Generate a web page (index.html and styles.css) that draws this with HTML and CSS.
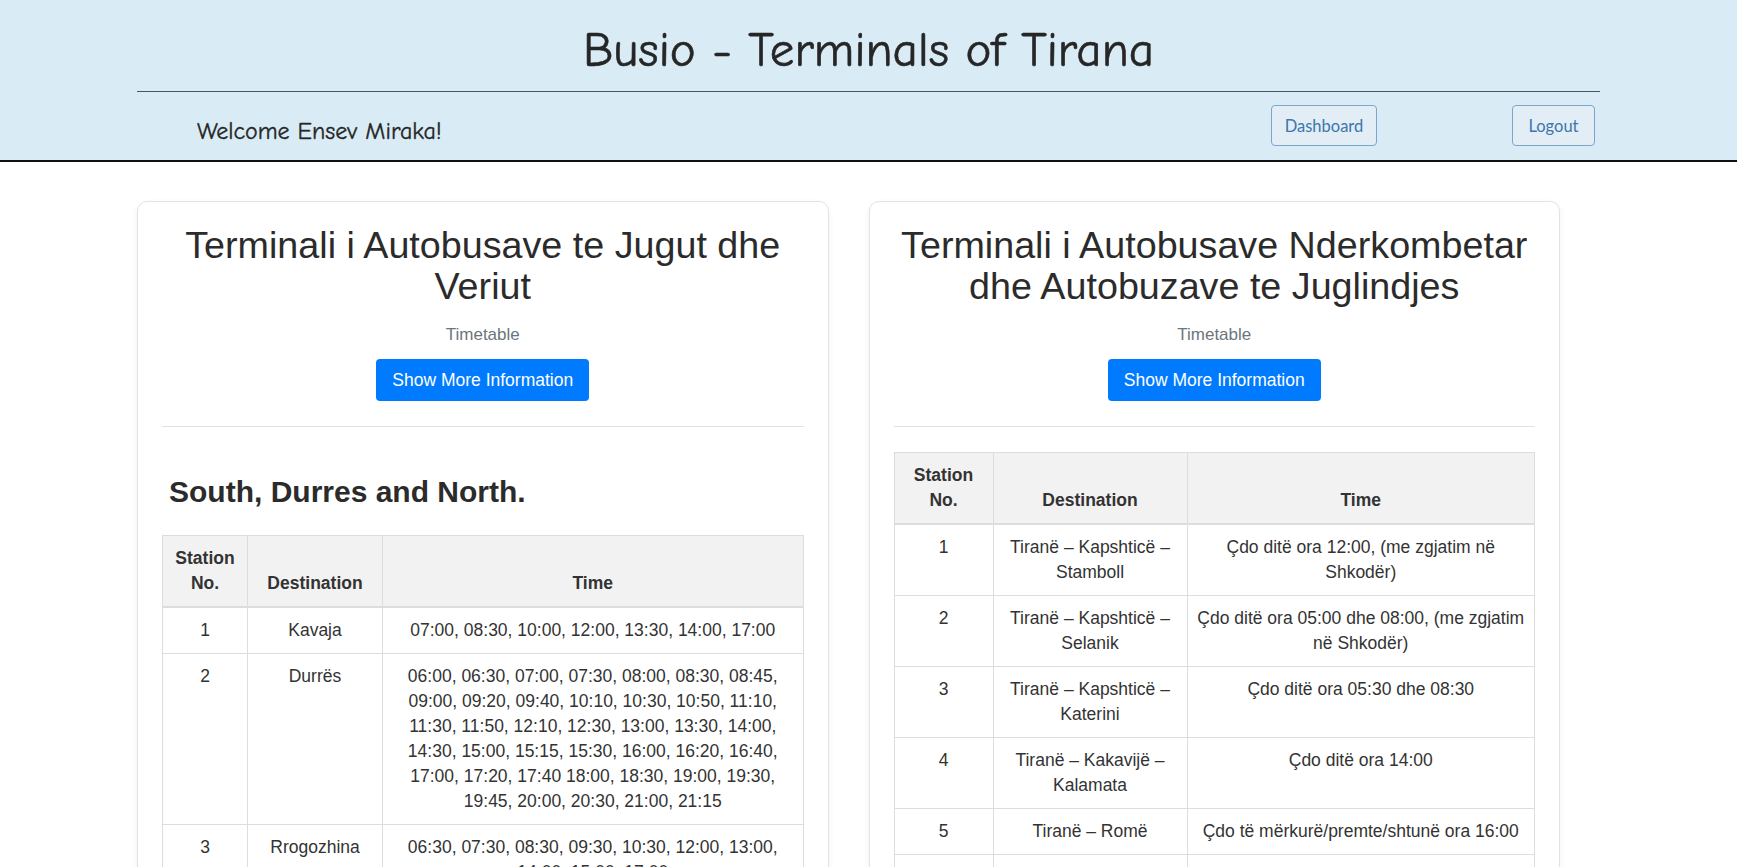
FILE: index.html
```html
<!DOCTYPE html>
<html lang="sq">
<head>
<meta charset="utf-8">
<title>Busio - Terminals of Tirana</title>
<link rel="stylesheet" href="styles.css">
</head>
<body>
<header class="site-header">
  <h1 class="site-title">Busio - Terminals of Tirana</h1>
  <div class="header-inner">
    <hr class="header-rule">
    <div class="user-bar">
      <span class="welcome">Welcome Ensev Miraka!</span>
      <a class="nav-btn nav-btn-dash" href="#">Dashboard</a>
      <a class="nav-btn nav-btn-logout" href="#">Logout</a>
    </div>
  </div>
</header>

<main class="terminals">
  <section class="card">
    <h2 class="card-title">Terminali i Autobusave te Jugut dhe Veriut</h2>
    <p class="card-subtitle">Timetable</p>
    <a class="btn-info" href="#">Show More Information</a>
    <hr class="card-divider">
    <h3 class="route-heading">South, Durres and North.</h3>
    <table class="timetable">
      <colgroup><col class="col-no-a"><col class="col-dest-a"><col></colgroup>
      <thead>
        <tr><th>Station No.</th><th>Destination</th><th>Time</th></tr>
      </thead>
      <tbody>
        <tr><td>1</td><td>Kavaja</td><td>07:00, 08:30, 10:00, 12:00, 13:30, 14:00, 17:00</td></tr>
        <tr><td>2</td><td>Durrës</td><td>06:00, 06:30, 07:00, 07:30, 08:00, 08:30, 08:45, 09:00, 09:20, 09:40, 10:10, 10:30, 10:50, 11:10, 11:30, 11:50, 12:10, 12:30, 13:00, 13:30, 14:00, 14:30, 15:00, 15:15, 15:30, 16:00, 16:20, 16:40, 17:00, 17:20, 17:40 18:00, 18:30, 19:00, 19:30, 19:45, 20:00, 20:30, 21:00, 21:15</td></tr>
        <tr><td>3</td><td>Rrogozhina</td><td>06:30, 07:30, 08:30, 09:30, 10:30, 12:00, 13:00, 14:00, 15:00, 17:00</td></tr>
      </tbody>
    </table>
  </section>

  <section class="card">
    <h2 class="card-title">Terminali i Autobusave Nderkombetar dhe Autobuzave te Juglindjes</h2>
    <p class="card-subtitle">Timetable</p>
    <a class="btn-info" href="#">Show More Information</a>
    <hr class="card-divider">
    <table class="timetable">
      <colgroup><col class="col-no-b"><col class="col-dest-b"><col></colgroup>
      <thead>
        <tr><th>Station No.</th><th>Destination</th><th>Time</th></tr>
      </thead>
      <tbody>
        <tr><td>1</td><td>Tiranë – Kapshticë – Stamboll</td><td>Çdo ditë ora 12:00, (me zgjatim në Shkodër)</td></tr>
        <tr><td>2</td><td>Tiranë – Kapshticë – Selanik</td><td>Çdo ditë ora 05:00 dhe 08:00, (me zgjatim në Shkodër)</td></tr>
        <tr><td>3</td><td>Tiranë – Kapshticë – Katerini</td><td>Çdo ditë ora 05:30 dhe 08:30</td></tr>
        <tr><td>4</td><td>Tiranë – Kakavijë – Kalamata</td><td>Çdo ditë ora 14:00</td></tr>
        <tr><td>5</td><td>Tiranë – Romë</td><td>Çdo të mërkurë/premte/shtunë ora 16:00</td></tr>
        <tr><td>&nbsp;</td><td>&nbsp;</td><td>&nbsp;</td></tr>
      </tbody>
    </table>
  </section>
</main>
</body>
</html>
```

FILE: styles.css
```css
html {
  scrollbar-width: none;
}
html::-webkit-scrollbar {
  display: none;
}

body {
  margin: 0;
  background: #fff;
  color: #333;
  font-family: "Liberation Sans", Arial, sans-serif;
}

/* ---------- header ---------- */
.site-header {
  background: #d9ecf5;
  border-bottom: 2px solid #111;
  padding: 22px 0 14px;
}

.site-title {
  margin: 0;
  text-align: center;
  font-family: "Comic Sans MS", "Comic Neue", Lato, sans-serif;
  font-weight: 400;
  font-size: 49px;
  line-height: 56px;
  color: #262626;
  -webkit-text-stroke: 0.6px #262626;
}

.header-inner {
  width: 1463px;
  margin: 13px auto 0;
}

.header-rule {
  margin: 0;
  border: 0;
  border-top: 1px solid #4d5555;
}

.user-bar {
  display: flex;
  align-items: flex-start;
  padding-top: 13px;
}

.welcome {
  margin: 12px 0 0 60px;
  font-family: "Comic Sans MS", "Comic Neue", Lato, sans-serif;
  font-size: 24px;
  line-height: 28px;
  color: #262626;
  -webkit-text-stroke: 0.35px #262626;
}

.nav-btn {
  display: flex;
  align-items: center;
  justify-content: center;
  box-sizing: border-box;
  height: 41px;
  border: 1px solid #7aa6cd;
  border-radius: 4px;
  background: #e3edf5;
  color: #3b76ad;
  font-family: Lato, "Noto Sans", sans-serif;
  font-size: 16.5px;
  text-decoration: none;
}

.nav-btn-dash {
  width: 106px;
  margin-left: auto;
}

.nav-btn-logout {
  width: 83px;
  margin-left: 135px;
  margin-right: 5px;
}

/* ---------- cards ---------- */
.terminals {
  width: 1463px;
  margin: 39px auto 0;
  display: grid;
  grid-template-columns: 1fr 1fr;
  align-items: start;
}

.card {
  margin-right: 40px;
  border: 1px solid #e3e3e3;
  border-radius: 10px;
  box-shadow: 0 2px 6px rgba(0, 0, 0, 0.06);
  padding: 23px 24px 24px;
  text-align: center;
}

.card-title {
  margin: 0;
  font-size: 37.7px;
  line-height: 41px;
  font-weight: 400;
  color: #2b2b2b;
}

.card-subtitle {
  margin: 15px 0 0;
  font-size: 17px;
  line-height: 25px;
  color: #6c757d;
}

.btn-info {
  display: block;
  width: fit-content;
  margin: 12px auto 0;
  padding: 8px 16px;
  border-radius: 4px;
  background: #007bff;
  color: #fff;
  font-size: 17.5px;
  line-height: 26px;
  text-decoration: none;
}

.card-divider {
  margin: 25px 0;
  border: 0;
  border-top: 1px solid #e2e2e2;
}

.route-heading {
  margin: 47px 0 25px 7px;
  text-align: left;
  font-size: 30px;
  line-height: 36px;
  font-weight: 700;
  color: #2b2b2b;
}

/* ---------- tables ---------- */
.timetable {
  width: 100%;
  border-collapse: collapse;
  table-layout: fixed;
  font-size: 17.5px;
  line-height: 25px;
  color: #333;
}

.timetable th,
.timetable td {
  border: 1px solid #ddd;
  padding: 10px 8px;
  text-align: center;
}

.timetable th {
  background: #f2f2f2;
  vertical-align: bottom;
  font-weight: 700;
  border-bottom: 2px solid #ddd;
}

.timetable td {
  vertical-align: top;
}

.col-no-a { width: 85px; }
.col-dest-a { width: 135px; }
.col-no-b { width: 99px; }
.col-dest-b { width: 194px; }
```
